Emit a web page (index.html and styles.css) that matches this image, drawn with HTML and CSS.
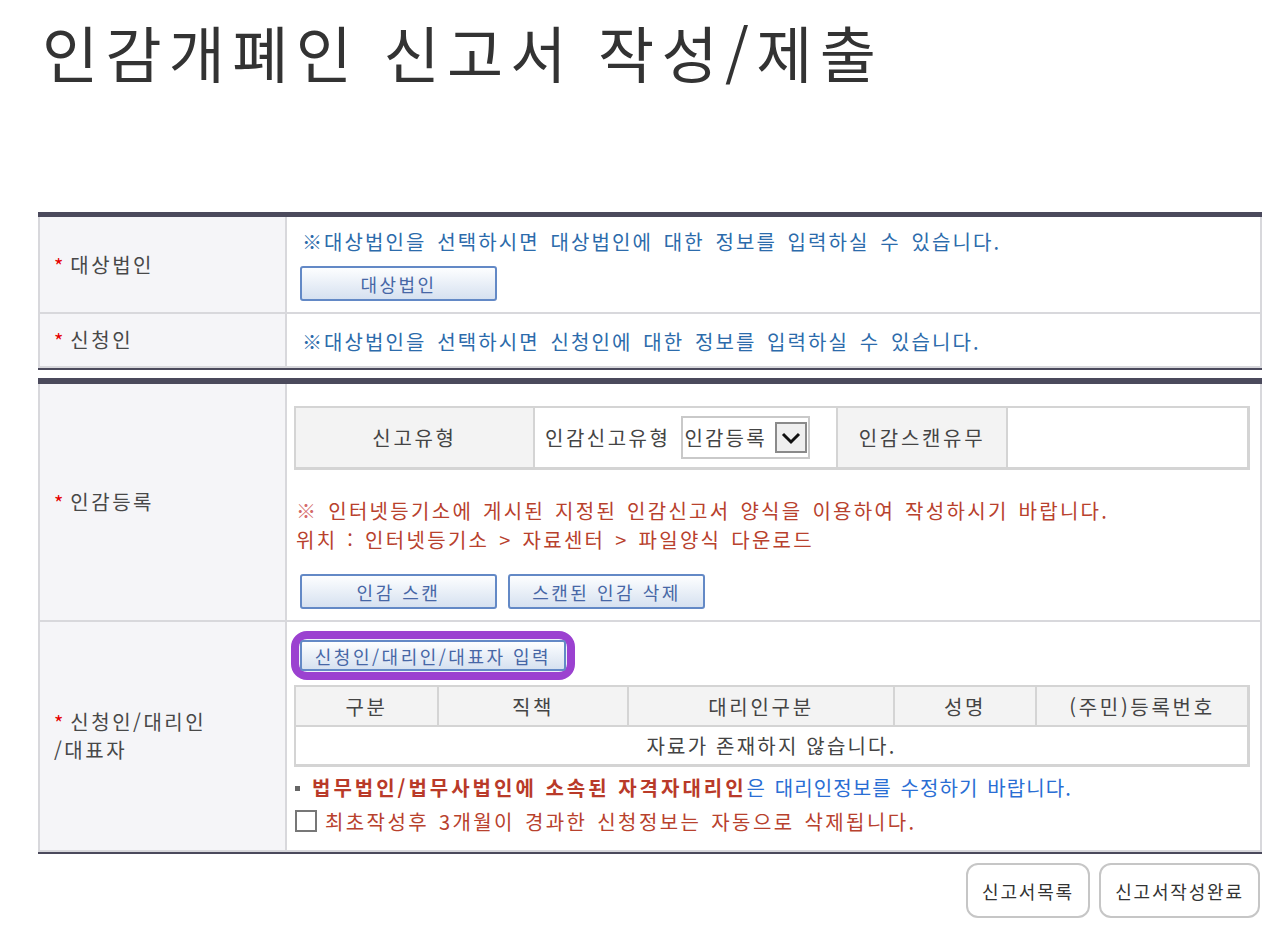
FILE: index.html
```html
<!DOCTYPE html>
<html lang="ko">
<head>
<meta charset="utf-8">
<title>인감개폐인 신고서 작성/제출</title>
<link rel="stylesheet" href="styles.css">
</head>
<body>
<div class="page">
  <h1 class="title">인감개폐인 신고서 작성/제출</h1>

  <table class="form form-a">
    <tr>
      <th class="label"><span class="req">*</span>대상법인</th>
      <td class="cell cell-r1">
        <p class="info">※대상법인을 선택하시면 대상법인에 대한 정보를 입력하실 수 있습니다.</p>
        <button class="btn btn-wide btn-r1" type="button">대상법인</button>
      </td>
    </tr>
    <tr>
      <th class="label"><span class="req">*</span>신청인</th>
      <td class="cell cell-r2">
        <p class="info">※대상법인을 선택하시면 신청인에 대한 정보를 입력하실 수 있습니다.</p>
      </td>
    </tr>
  </table>

  <table class="form form-b">
    <tr>
      <th class="label"><span class="req">*</span>인감등록</th>
      <td class="cell cell-r3">
        <table class="grid grid-type">
          <tr>
            <th class="g-th t1">신고유형</th>
            <td class="g-td t2">
              <div class="type-wrap">
                <span>인감신고유형</span>
                <span class="select">
                  <span class="select-text">인감등록</span>
                  <span class="select-arrow">
                    <svg width="22" height="14" viewBox="0 0 22 14"><path d="M3 3 L11 11 L19 3" fill="none" stroke="#111" stroke-width="3"/></svg>
                  </span>
                </span>
              </div>
            </td>
            <th class="g-th t3">인감스캔유무</th>
            <td class="g-td t4"></td>
          </tr>
        </table>
        <p class="notice"><span class="notice-mark">※</span> 인터넷등기소에 게시된 지정된 인감신고서 양식을 이용하여 작성하시기 바랍니다.<br>위치 : 인터넷등기소 &gt; 자료센터 &gt; 파일양식 다운로드</p>
        <div class="btn-row">
          <button class="btn btn-wide" type="button">인감 스캔</button>
          <button class="btn btn-wide" type="button">스캔된 인감 삭제</button>
        </div>
      </td>
    </tr>
    <tr>
      <th class="label"><span class="label-line"><span class="req">*</span>신청인/대리인</span><span class="label-line">/대표자</span></th>
      <td class="cell cell-r4">
        <div class="ring"><button class="btn btn-input" type="button">신청인/대리인/대표자 입력</button></div>
        <table class="grid grid-list">
          <tr class="g-head">
            <th class="g-th l1">구분</th>
            <th class="g-th l2">직책</th>
            <th class="g-th l3">대리인구분</th>
            <th class="g-th l4">성명</th>
            <th class="g-th l5">(주민)등록번호</th>
          </tr>
          <tr>
            <td class="g-td g-empty" colspan="5">자료가 존재하지 않습니다.</td>
          </tr>
        </table>
        <p class="bullet"><span class="sq"></span><strong class="strong-red">법무법인/법무사법인에 소속된 자격자대리인</strong><span class="blue">은 대리인정보를 수정하기 바랍니다.</span></p>
        <label class="check-line"><span class="checkbox"></span><span class="check-text">최초작성후 3개월이 경과한 신청정보는 자동으로 삭제됩니다.</span></label>
      </td>
    </tr>
  </table>

  <div class="actions">
    <button class="act act-list" type="button">신고서목록</button>
    <button class="act act-done" type="button">신고서작성완료</button>
  </div>
</div>
</body>
</html>
```
FILE: styles.css
```css
* { box-sizing: border-box; }

body {
  margin: 0;
  background: #fff;
  font-family: "Noto Sans CJK KR", "Noto Sans", sans-serif;
  color: #444;
}

.page {
  padding: 0 22px 20px 38px;
}

.title {
  margin: 0;
  height: 212px;
  padding: 10px 0 0 4px;
  font-size: 61px;
  line-height: 84px;
  font-weight: 400;
  color: #333;
  letter-spacing: 7.3px;
}

/* main form tables */
.form {
  width: 1224px;
  border-collapse: separate;
  border-spacing: 0;
}
.form-a {
  border-top: 5px solid #4b4a5c;
  border-bottom: 2px solid #4b4a5c;
}
.form-b {
  margin-top: 8px;
  border-top: 6px solid #4b4a5c;
  border-bottom: 2px solid #4b4a5c;
}

.label {
  width: 249px;
  padding: 0 0 0 14px;
  text-align: left;
  vertical-align: middle;
  font-size: 20px;
  font-weight: 400;
  line-height: 28px;
  color: #484848;
  letter-spacing: 2.5px;
  background: #f5f5f8;
  border-left: 2px solid #d8d8dc;
  border-right: 2px solid #d8d8dc;
  border-bottom: 2px solid #d8d8dc;
}
.label-line {
  display: block;
}
.req {
  display: inline-block;
  height: 20px;
  line-height: 30px;
  vertical-align: top;
  overflow: visible;
  color: #e60000;
  margin-right: 7px;
  letter-spacing: 0;
}

.cell {
  vertical-align: top;
  padding: 0 0 0 4px;
  border-right: 2px solid #d8d8dc;
  border-bottom: 2px solid #d8d8dc;
  background: #fff;
}
.cell-r1 { padding-top: 12px; padding-bottom: 11px; }
.cell-r2 { padding-top: 15px; padding-bottom: 11px; }
.cell-r3 { padding-top: 22px; padding-bottom: 11px; }
.cell-r4 { padding-top: 9px; padding-bottom: 15px; }

.info {
  margin: 0 0 0 11px;
  font-size: 20px;
  line-height: 26px;
  color: #2c6bab;
  letter-spacing: 2.1px;
  word-spacing: 3px;
}

.btn {
  display: block;
  padding: 0;
  font-family: inherit;
  font-size: 18px;
  color: #4767a6;
  letter-spacing: 2.5px;
  border: 2px solid #6389c6;
  border-radius: 3px;
  background: linear-gradient(#fdfeff, #d6e1f0);
}
.btn-wide {
  width: 197px;
  height: 35px;
}
.btn-r1 {
  margin: 11px 0 0 9px;
}

/* inner grids */
.grid {
  width: 956px;
  margin-left: 3px;
  table-layout: fixed;
  border-collapse: separate;
  border-spacing: 0;
  border-top: 2px solid #d4d4d4;
  border-left: 2px solid #d4d4d4;
  border-right: 3px solid #d4d4d4;
  border-bottom: 3px solid #d4d4d4;
  font-size: 20px;
  color: #444;
}
.g-th {
  font-weight: 400;
  background: #f3f3f3;
  text-align: center;
  padding: 0;
  letter-spacing: 2.7px;
}
.g-td {
  background: #fff;
  padding: 0;
}

.grid-type .g-th,
.grid-type .g-td {
  height: 59px;
  border-right: 2px solid #d4d4d4;
  vertical-align: middle;
}
.grid-type .t4 { border-right: 0; }
.t1 { width: 239px; }
.t2 { width: 303px; }
.t3 { width: 170px; }
.t4 { width: 239px; }

.type-wrap {
  display: flex;
  align-items: center;
  gap: 11px;
  padding-left: 10px;
  letter-spacing: 2.5px;
}
.select {
  display: flex;
  align-items: center;
  justify-content: space-between;
  width: 129px;
  height: 43px;
  padding: 0 1px 0 1px;
  border: 2px solid #c9c9c9;
  background: #fff;
}
.select-text {
  font-size: 20px;
  letter-spacing: 2.2px;
}
.select-arrow {
  display: flex;
  align-items: center;
  justify-content: center;
  width: 32px;
  height: 31px;
  border: 2px solid #8a8a8a;
  background: #efefef;
}

.notice {
  margin: 26px 0 0 5px;
  font-size: 20px;
  line-height: 29px;
  color: #b8412d;
  letter-spacing: 2.3px;
  word-spacing: 2px;
}
.notice-mark { color: #d46a6a; }

.btn-row {
  display: flex;
  gap: 11px;
  margin: 20px 0 0 9px;
}

.ring {
  display: inline-block;
  padding: 1px;
  border: 8px solid #9b41d0;
  border-radius: 16px;
  background: #eef2fa;
}
.btn-input {
  width: 266px;
  height: 31px;
  font-size: 18px;
}

.grid-list {
  margin-top: 5px;
}
.g-head .g-th {
  height: 40px;
  border-bottom: 2px solid #d4d4d4;
  border-right: 2px solid #d4d4d4;
}
.g-head .l5 { border-right: 0; }
.l1 { width: 143px; }
.l2 { width: 190px; }
.l3 { width: 266px; }
.l4 { width: 142px; }
.l5 { width: 210px; }
.g-empty {
  height: 37px;
  text-align: center;
  letter-spacing: 2.2px;
}

.bullet {
  display: flex;
  align-items: center;
  margin: 8px 0 0 4px;
  font-size: 20px;
  line-height: 26px;
}
.sq {
  width: 5px;
  height: 5px;
  background: #666;
  margin-right: 12px;
}
.strong-red {
  color: #b93a29;
  font-weight: 700;
  letter-spacing: 3px;
}
.blue {
  color: #2a6ed4;
  letter-spacing: 1.1px;
  word-spacing: 2px;
}

.check-line {
  display: flex;
  align-items: center;
  margin: 6px 0 0 4px;
  height: 28px;
}
.checkbox {
  width: 22px;
  height: 22px;
  border: 2px solid #777;
  background: #fff;
  margin-right: 8px;
}
.check-text {
  font-size: 20px;
  color: #b8412d;
  letter-spacing: 2.4px;
  word-spacing: 2px;
}

.actions {
  display: flex;
  justify-content: flex-end;
  gap: 9px;
  margin: 9px 2px 0 0;
}
.act {
  height: 55px;
  padding: 0;
  font-family: inherit;
  font-size: 18px;
  color: #333;
  letter-spacing: 1.8px;
  background: #fff;
  border: 2px solid #c6c6c6;
  border-radius: 12px;
}
.act-list { width: 124px; }
.act-done { width: 161px; }
```
